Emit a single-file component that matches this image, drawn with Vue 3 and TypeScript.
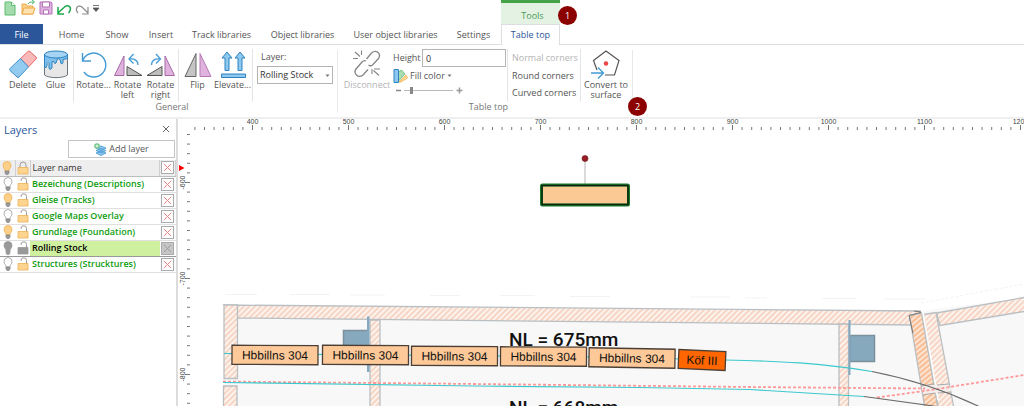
<script setup lang="ts">
import { ref } from 'vue'

interface Layer {
  name: string
  lit: boolean
  active?: boolean
}

interface Wagon {
  cx: number
  cy: number
  width: number
  angle: number
  label: string
  loco?: boolean
}

const tabs = [
  { label: 'Home', cls: 'w-home' },
  { label: 'Show', cls: 'w-show' },
  { label: 'Insert', cls: 'w-show' },
  { label: 'Track libraries', cls: 'w-track' },
  { label: 'Object libraries', cls: 'w-object' },
  { label: 'User object libraries', cls: 'w-user' },
  { label: 'Settings', cls: 'w-settings' },
]

const layers: Layer[] = [
  { name: 'Bezeichung (Descriptions)', lit: false },
  { name: 'Gleise (Tracks)', lit: true },
  { name: 'Google Maps Overlay', lit: false },
  { name: 'Grundlage (Foundation)', lit: true },
  { name: 'Rolling Stock', lit: false, active: true },
  { name: 'Structures (Strucktures)', lit: false },
]

const wagons: Wagon[] = [
  { cx: 275, cy: 355, width: 86, angle: 0.3, label: 'Hbbillns 304' },
  { cx: 365.5, cy: 355, width: 86, angle: 0.3, label: 'Hbbillns 304' },
  { cx: 454.5, cy: 356, width: 86, angle: 0.3, label: 'Hbbillns 304' },
  { cx: 543.5, cy: 356.5, width: 86, angle: 0.3, label: 'Hbbillns 304' },
  { cx: 632, cy: 358, width: 86, angle: 1, label: 'Hbbillns 304' },
  { cx: 702, cy: 360, width: 47, angle: 2.5, label: 'Köf III', loco: true },
]

const layer = ref('Rolling Stock')
const height = ref('0')
const size = ref(12)

const hTicks = Array.from({ length: 87 }, (_, i) => {
  const value = 340 + i * 10
  return { value, x: 252.5 + (value - 400) * 0.96, major: value % 100 === 0 }
})
const vTicks = Array.from({ length: 29 }, (_, i) => {
  const value = -550 - i * 10
  return { value, y: 182.5 - (value + 600) * 0.96, major: value % 100 === 0 }
})
</script>

<template>
  <div class="app">
    <header class="top">
      <div class="quick">
        <button class="q" aria-label="New">
          <svg width="16" height="16" viewBox="0 0 16 16"><path d="M3 2h6.500l3.500 3.500V15H3z" fill="#a5dcae" stroke="#5dbb70" /><path d="M9.500 2v3.500H13" fill="#fff" stroke="#5dbb70" /></svg>
        </button>
        <button class="q" aria-label="Open">
          <svg width="16" height="16" viewBox="0 0 16 16"><path d="M2 14V4h4l1 2h6v8z" fill="#fbd38d" stroke="#eda94a" /><path d="M2 14l2-6h11l-2 6z" fill="#fde3b0" stroke="#eda94a" /><path d="M8 4c1-2 3-2 6-2M12 0l2.500 2L12 4" fill="none" stroke="#4fb873" /></svg>
        </button>
        <button class="q" aria-label="Save">
          <svg width="16" height="16" viewBox="0 0 16 16"><path d="M2 2h11l1 1v11H2z" fill="#dfb3df" stroke="#b573b8" /><path d="M4.500 2h7v5h-7zM5.500 10h5v4h-5z" fill="#fff" stroke="#b573b8" /></svg>
        </button>
        <button class="q" aria-label="Undo">
          <svg width="16" height="16" viewBox="0 0 16 16"><path d="M2 7v7h6M2 13L8.500 7c5-3.500 8 1.500 4 6" fill="none" stroke="#1da64a" stroke-width="1.500" /></svg>
        </button>
        <button class="q" aria-label="Redo">
          <svg width="16" height="16" viewBox="0 0 16 16"><path d="M14 7v7H8M14 13L8 7C3.500 4 .5 9 4 13" fill="none" stroke="#8b8b8b" stroke-width="1.200" /></svg>
        </button>
        <button class="q-more" aria-label="Customize">
          <svg width="8" height="8" viewBox="0 0 8 8"><path d="M1 .5h6M1 3h6L4 6.500z" stroke="#555" fill="#555" stroke-width=".8" /></svg>
        </button>
      </div>
      <div class="context">Tools<span class="badge badge-one">1</span></div>
      <nav class="tabs">
        <button class="tab file">File</button>
        <button v-for="t in tabs" :key="t.label" class="tab" :class="t.cls">{{ t.label }}</button>
        <button class="tab current">Table top</button>
      </nav>
    </header>

    <section class="ribbon">
      <div class="group general">
        <div class="tools">
          <button class="tool">
            <svg width="30" height="30" viewBox="0 0 30 30"><path d="M12.500 9.500L20 2.500q1-1 2 0l6 5.500q1 1 0 2L20.500 18z" fill="#f9b9b9" stroke="#ea6a6a" /><path d="M12.500 9.500l8 8.500-9.500 10q-1 1-2 0L2 21.500q-1-1 0-2z" fill="#92caf0" stroke="#3d8ecb" /></svg>
            <span>Delete</span>
          </button>
          <button class="tool">
            <svg width="30" height="30" viewBox="0 0 30 30"><path d="M3.500 6v20c4 3.500 19 3.500 23 0V6z" fill="#e7e7e7" stroke="#6b7780" /><path d="M3.500 5.500v13q2 1 2.500-2v-2q1-2 2 0v5q1.500 2 3-.5v-6q1-1.500 2 0 .5 2.500 2 1l1-3.500q2-1.500 3 0l1 4q1.500 1 2-1v-3l4.500-1V5.500z" fill="#7fc0ed" stroke="#2e82be" /><ellipse cx="15" cy="5.500" rx="11.500" ry="3.500" fill="#a4d3f3" stroke="#2e82be" /></svg>
            <span>Glue</span>
          </button>
          <i class="sep"></i>
          <button class="tool mid">
            <svg width="30" height="30" viewBox="0 0 30 30"><path d="M3.500 4v8H12M3.500 12A12 12 0 1 1 5 23" fill="none" stroke="#459bd6" stroke-width="1.400" /></svg>
            <span>Rotate...</span>
          </button>
          <button class="tool">
            <svg width="30" height="30" viewBox="0 0 30 30"><path d="M11 7v19.500H1.500z" fill="#dfb3dd" stroke="#a969a8" /><path d="M14 17.500v9h15z" fill="#bdbdbd" stroke="#555" /><path d="M20.500 5L16 10l4.500 4.500M16 10c6-1 9 2 9 6" fill="none" stroke="#459bd6" stroke-width="1.300" /></svg>
            <span>Rotate<br />left</span>
          </button>
          <button class="tool">
            <svg width="30" height="30" viewBox="0 0 30 30"><path d="M19 7v19.500h9.500z" fill="#dfb3dd" stroke="#a969a8" /><path d="M16 17.500v9H1z" fill="#bdbdbd" stroke="#555" /><path d="M10 5l4.500 5-4.500 4.500M14.500 10C8.500 9 5.500 12 5.500 16" fill="none" stroke="#459bd6" stroke-width="1.300" /></svg>
            <span>Rotate<br />right</span>
          </button>
          <i class="sep"></i>
          <button class="tool">
            <svg width="30" height="30" viewBox="0 0 30 30"><path d="M13 4.500v23H2z" fill="#c4c4c4" stroke="#666" /><path d="M17 4.500v23h11z" fill="#dfb3dd" stroke="#b87ab6" /></svg>
            <span>Flip</span>
          </button>
          <button class="tool wide">
            <svg width="30" height="30" viewBox="0 0 30 30"><path d="M9 3l5 6h-3v12.500H7V9H4zM22 3l5 6h-3v12.500h-4V9h-3zM3.500 25h24v3.500h-24z" fill="#8cc8f0" stroke="#2e82be" /></svg>
            <span>Elevate...</span>
          </button>
          <i class="sep"></i>
          <div class="layer-field">
            <label for="layer">Layer:</label>
            <div class="select">
              <select id="layer" v-model="layer">
                <option v-for="l in layers" :key="l.name">{{ l.name }}</option>
              </select>
              <svg class="caret" width="5" height="4" viewBox="0 0 5 4"><path d="M.5.500h4l-2 2.500z" fill="#777" /></svg>
            </div>
          </div>
        </div>
        <div class="caption">General</div>
      </div>

      <div class="group tabletop">
        <div class="tools">
          <button class="tool broad" disabled>
            <svg width="30" height="30" viewBox="0 0 30 30"><g fill="none" stroke="#858585" stroke-width="1.300"><path d="M14.500 10l5-6c5-4 10 1 7 5.500l-6 6.500q-2 1.500-4 0M14 12q-2-1-4 1l-6 7c-3 4 2 10 7 6l5-5.500" /><path d="M3 3l5 4.500M9.500 1.500V6M1 9.500h5M20 20v5M22 20h6M21.500 21.500l5.500 5" stroke-width="1.100" /></g></svg>
            <span>Disconnect</span>
          </button>
          <div class="fields">
            <div class="height-row">
              <label for="height">Height</label>
              <input id="height" v-model="height" type="text" />
            </div>
            <button class="fill">
              <svg width="15" height="14" viewBox="0 0 15 14"><path d="M6 13l7-7 1.500 3L8 13z" fill="#fdd793" stroke="#efb24c" stroke-width=".8" /><path d="M5.500 12V3l3-2L12 5z" fill="#a9dcae" stroke="#58b873" stroke-width=".8" /><path d="M1 .5h4.500v13H1z" fill="#8cc8f0" stroke="#2e82be" /></svg>
              Fill color
              <svg width="5" height="4" viewBox="0 0 5 4"><path d="M.5.500h4l-2 2.500z" fill="#777" /></svg>
            </button>
            <div class="slide">
              <button class="step" aria-label="Smaller"><svg width="6" height="7" viewBox="0 0 6 7"><path d="M1 3.500h5" stroke="#888" stroke-width="1.500" /></svg></button>
              <input v-model.number="size" type="range" min="0" max="100" aria-label="Size" />
              <button class="step" aria-label="Larger"><svg width="7" height="7" viewBox="0 0 7 7"><path d="M.5 3.500h6M3.500.500v6" stroke="#999" stroke-width="1.500" /></svg></button>
            </div>
          </div>
          <i class="sep"></i>
          <div class="corners">
            <button disabled>Normal corners</button>
            <button>Round corners</button>
            <button>Curved corners</button>
          </div>
          <i class="sep"></i>
          <button class="tool broad">
            <svg width="32" height="30" viewBox="0 0 32 30"><path d="M7 21L3.500 11.500 16 2l13 9.500L24.500 26H15" fill="none" stroke="#555" stroke-width="1.200" /><circle cx="16" cy="14.500" r="2.200" fill="#ef4444" /><path d="M1 24h12M8 18.500l5.500 5.500L8 29.500" fill="none" stroke="#459bd6" stroke-width="1.400" /></svg>
            <span>Convert to<br />surface</span>
          </button>
        </div>
        <div class="caption">Table top</div>
        <span class="badge badge-two">2</span>
      </div>
    </section>

    <main class="work">
      <aside class="panel">
        <div class="panel-head">
          <h2>Layers</h2>
          <button class="close" aria-label="Close"><svg width="8" height="8" viewBox="0 0 8 8"><path d="M1 1l6 6M7 1L1 7" stroke="#666" /></svg></button>
        </div>
        <button class="add">
          <svg width="13" height="13" viewBox="0 0 13 13"><path d="M2 10l5-2 5 2-5 2.500zM2 7.500l5-2 5 2L7 10zM2 5l5-2 5 2-5 2.500z" fill="#8cc8f0" stroke="#4496cf" stroke-width=".8" /><circle cx="3" cy="3" r="2.800" fill="#6cc487" /><path d="M1.500 3h3M3 1.500v3" stroke="#fff" stroke-width=".9" /></svg>
          Add layer
        </button>
        <table>
          <thead>
            <tr>
              <th class="c-icon"><svg class="bulb lit" width="10" height="14" viewBox="0 0 10 14"><path d="M3 10C3 7.500 1 7 1 4.500a4 4 0 0 1 8 0C9 7 7 7.500 7 10z" /><path class="base" d="M3 10h4v2L6 13.500H4L3 12z" /></svg></th>
              <th class="c-icon"><svg class="lock" width="12" height="14" viewBox="0 0 12 14"><path class="arc" d="M3 7V4a3 3 0 0 1 6 0v3" /><path class="body" d="M1 6.500h10V13H1z" /></svg></th>
              <th class="c-name">Layer name</th>
              <th class="c-x"><button class="del" aria-label="Delete layers"><svg width="12" height="12" viewBox="0 0 12 12"><path d="M2 2l8 8M10 2l-8 8" /></svg></button></th>
            </tr>
          </thead>
          <tbody>
            <tr v-for="l in layers" :key="l.name" :class="{ active: l.active }">
              <td class="c-icon"><svg class="bulb" :class="{ lit: l.lit }" width="10" height="14" viewBox="0 0 10 14"><path d="M3 10C3 7.500 1 7 1 4.500a4 4 0 0 1 8 0C9 7 7 7.500 7 10z" /><path class="base" d="M3 10h4v2L6 13.500H4L3 12z" /></svg></td>
              <td class="c-icon"><svg class="lock" width="12" height="14" viewBox="0 0 12 14"><path class="arc" d="M4 4V3.500a2.500 2.500 0 0 1 5.500 0V7" /><path class="body" d="M1 6.500h10V13H1z" /></svg></td>
              <td class="c-name">{{ l.name }}</td>
              <td class="c-x"><button class="del" :aria-label="'Delete ' + l.name"><svg width="12" height="12" viewBox="0 0 12 12"><path d="M2 2l8 8M10 2l-8 8" /></svg></button></td>
            </tr>
          </tbody>
        </table>
      </aside>

      <svg class="canvas">
        <defs>
          <pattern id="hatch" width="4" height="4" patternUnits="userSpaceOnUse" patternTransform="rotate(45)">
            <rect width="4" height="4" fill="#fdf3ee" />
            <rect width="2" height="4" fill="#f6d5c4" />
          </pattern>
          <pattern id="hatch-strong" width="4" height="4" patternUnits="userSpaceOnUse" patternTransform="rotate(50)">
            <rect width="4" height="4" fill="#fde4d2" />
            <rect width="2" height="4" fill="#f7bd95" />
          </pattern>
        </defs>
        <g transform="translate(-178 -119)">
          <g class="plan">
            <path class="floor" d="M224 305L920 311 1024 298 1400 240V900H224z" />
            <path class="faint" d="M225 294.500h32M290 294.500h40M350 295h35M430 295.500h30M500 295.500h35M570 296.500h40M690 297h40M745 298h22M822 298.500h34M885 299h40" />
            <path class="faint dash" d="M921 303L1024 284" />
            <g fill="url(#hatch)" class="wall">
              <path d="M224 305L920 311 915 325 237 318z" />
              <path d="M224 305h13.500v73.500H224zM223.500 386h13.500v400h-13.500z" />
              <path d="M370 320h10v500h-10zM839 324h9.500v500H839z" />
              <path d="M936.500 313L1024 297.500 1400 231v14L1024 311.500 940 325.500z" />
              <path d="M923.500 314.500l12.500-2L953.500 406l60 320h-16L938 406z" />
            </g>
            <path d="M909.500 315.500l12-2.500L937.500 406l60 350h-14L924.500 406z" fill="url(#hatch-strong)" class="wall" />
            <path d="M909 315.500l4 18M909 315.500l12-3M914 311l7 1" class="edge" />
            <path d="M922 306L938 400" stroke="#fff" stroke-width="1.500" />
            <path d="M922 388l27-2.500M923 392l28-2.500" stroke="#f4efec" stroke-width="4" />
            <path d="M921 386l13-2M937 385l12-1M923 395l12-2M938 393l13-1" class="joint" />
            <path d="M343.500 330.500H368V347h-24.500zM850 335.500h24.500v26H850z" class="block" />
            <path d="M367 316.500h2.500V372H367zM848.500 320h2v55h-2z" class="bar" />
          </g>

          <text x="509" y="346" class="note">NL = 675mm</text>
          <text x="509" y="414" class="note">NL = 668mm</text>

          <g class="tracks">
            <path d="M223 381.500L475 384 750 387 925 388.500" class="guide" />
            <path d="M877 397.500L931 390 1024 375 1400 314" class="guide" />
            <path d="M224 353.500L600 357 725 360C780 361 820 363 872 371.500" class="rail" />
            <path d="M223 382.500L475 386 640 387.500 750 389.500 864 396.500" class="rail" />
            <path d="M872 371.500C900 377 940 388 978 406L1030 435M864 396.500L930 405.500 980 414" class="rail far" />
          </g>

          <g v-for="w in wagons" :key="w.cx" :transform="`rotate(${w.angle} ${w.cx} ${w.cy})`">
            <rect :x="w.cx - w.width / 2" :y="w.cy - 9.500" :width="w.width" height="19" class="wagon" :class="{ loco: w.loco }" />
            <text :x="w.cx" :y="w.cy + 4.500" class="wagon-text">{{ w.label }}</text>
          </g>

          <path d="M585 161v23" stroke="#b5b5b5" />
          <circle cx="585" cy="158.500" r="3" fill="#9c1b22" stroke="#6c2a2e" stroke-width=".7" />
          <rect x="541.500" y="185" width="87" height="20" rx="1" fill="#fbc993" stroke="#1b7a2a" stroke-width="3" />
          <rect x="542" y="185.500" width="86" height="19" fill="none" stroke="#0b260d" stroke-width="1.500" />

          <g class="ruler">
            <template v-for="t in hTicks" :key="t.value">
              <path :d="`M${t.x} ${t.major ? 125 : 127}V130`" />
              <text v-if="t.major" :x="t.x" y="124">{{ t.value }}</text>
            </template>
            <template v-for="t in vTicks" :key="t.value">
              <path :d="`M${t.major ? 185 : 187} ${t.y}H190`" />
              <text v-if="t.major" :transform="`translate(184.500 ${t.y}) rotate(-90)`">{{ t.value }}</text>
            </template>
            <path d="M179 165l5.500 3-5.500 3z" class="marker" />
          </g>
        </g>
      </svg>
    </main>
  </div>
</template>

<style>
body {
  background: #fff;
  overflow: hidden;
}
</style>

<style scoped>
.app {
  display: flex;
  flex-direction: column;
  height: 100vh;
  font: 9px/10px "Open Sans", "Noto Sans", sans-serif;
  color: #555;
}
.app * {
  box-sizing: border-box;
}
button,
input,
select {
  margin: 0;
  padding: 0;
  border: 0;
  border-radius: 0;
  background: none;
  font: inherit;
  color: inherit;
}
svg {
  display: block;
  flex: none;
}
.top {
  display: grid;
  grid-template-columns: 501px 59px 1fr;
  grid-template-rows: 24px 21px;
}
.quick {
  display: flex;
  align-items: flex-start;
  gap: 2px;
  padding-left: 2px;
}
.q {
  width: 16px;
  height: 16px;
}
.q-more {
  padding-top: 5px;
}
.context {
  position: relative;
  display: flex;
  align-items: center;
  justify-content: center;
  padding: 4px 0 0 4px;
  border-top: 3px solid #45a247;
  background: #e4f2e4;
  color: #4b9a55;
}
.badge {
  position: absolute;
  z-index: 1;
  width: 19px;
  height: 19px;
  border-radius: 50%;
  background: #8b0000;
  color: #fff;
  line-height: 19px;
  text-align: center;
}
.badge-one {
  left: 57px;
  top: 3px;
}
.badge-two {
  right: -14px;
  top: 52px;
}
.tabs {
  grid-column: 1 / -1;
  display: flex;
  border-bottom: 1px solid #dcdfe1;
}
.tab {
  white-space: nowrap;
  padding-top: 2px;
}
.file {
  width: 43px;
  margin-right: 5px;
  background: #2b579a;
  color: #fff;
  height: 20px;
}
.w-home { width: 47px; }
.w-show { width: 44px; }
.w-track { width: 77px; }
.w-object { width: 85px; }
.w-user { width: 101px; }
.w-settings { width: 55px; }
.current {
  width: 59px;
  height: 21px;
  padding-top: 0;
  border: 1px solid #dcdfe1;
  border-bottom: 0;
  background: #fff;
  color: #2b579a;
}
.ribbon {
  display: flex;
  height: 74px;
  border-bottom: 2px solid #efefef;
}
.group {
  position: relative;
  padding-top: 4px;
}
.group::after {
  content: "";
  position: absolute;
  right: 0;
  top: 5px;
  bottom: 5px;
  width: 1px;
  background: #e6e8ea;
}
.general {
  width: 338px;
  padding-left: 6px;
}
.tabletop {
  width: 295px;
  padding-left: 6px;
}
.tools {
  display: flex;
  height: 53px;
}
.caption {
  text-align: center;
  color: #777;
}
.tool {
  display: flex;
  flex-direction: column;
  align-items: center;
  gap: 1px;
  width: 33px;
  white-space: nowrap;
}
.tool.mid { width: 35px; }
.tool.wide { width: 37px; }
.tool.broad { width: 46px; }
button:disabled {
  color: #b4b4b4;
}
.sep {
  flex: none;
  width: 1px;
  margin: 0 2px 0 1px;
  background: #e3e6e8;
}
.layer-field {
  width: 76px;
  margin-left: 2px;
}
.layer-field label {
  display: block;
  padding: 3px 0 4px 4px;
}
.select {
  position: relative;
}
select {
  appearance: none;
  display: block;
  width: 100%;
  height: 18px;
  padding-left: 2px;
  border: 1px solid #b4b4b4;
  color: #333;
}
.caret {
  position: absolute;
  right: 3px;
  top: 8px;
}
.fields {
  width: 113px;
  margin-left: 3px;
}
.height-row {
  display: flex;
  align-items: center;
  gap: 2px;
}
.height-row label {
  width: 27px;
  white-space: nowrap;
}
.height-row input {
  flex: 1;
  min-width: 0;
  height: 18px;
  padding-left: 3px;
  border: 1px solid #b4b4b4;
  color: #333;
}
.fill {
  display: flex;
  align-items: center;
  gap: 2px;
  height: 17px;
}
.slide {
  display: flex;
  align-items: center;
  gap: 3px;
  padding-left: 2px;
  height: 12px;
}
input[type="range"] {
  appearance: none;
  width: 49px;
  height: 8px;
  background: linear-gradient(#bbb, #bbb) center / 100% 1px no-repeat;
}
input[type="range"]::-webkit-slider-thumb {
  appearance: none;
  width: 3px;
  height: 7px;
  background: #888;
}
.corners {
  display: flex;
  flex-direction: column;
  align-items: flex-start;
  width: 69px;
  padding-left: 2px;
  white-space: nowrap;
}
.corners button {
  height: 18px;
}
.work {
  display: flex;
  flex: 1;
  min-height: 0;
}
.panel {
  flex: none;
  width: 178px;
  border-right: 2px solid #dcdcdc;
}
.panel-head {
  display: flex;
  align-items: flex-start;
  justify-content: space-between;
  height: 21px;
  padding: 3px 6px 0 4px;
}
h2 {
  margin: 0;
  font-size: 11px;
  line-height: 16px;
  font-weight: 400;
  color: #2b579a;
}
.close {
  padding: 3px 0;
}
.add {
  display: flex;
  align-items: center;
  justify-content: center;
  gap: 2px;
  width: 107px;
  height: 18px;
  margin: 0 0 2px 68px;
  border: 1px solid #c4c4c4;
}
table {
  width: 176px;
  border-collapse: collapse;
  table-layout: fixed;
}
th,
td {
  padding: 0;
  height: 16px;
  border-bottom: 1px solid #e0e0e0;
}
th {
  background: #eee;
  border-right: 1px solid #d0d0d0;
  border-bottom-color: #bdbdbd;
  font-weight: 400;
  color: #333;
}
.c-icon { width: 15px; }
.c-x { width: 16px; }
.c-name {
  padding-left: 2px;
  text-align: left;
  white-space: nowrap;
}
td.c-name {
  font-weight: 600;
  color: #0f9c0f;
}
.c-icon svg,
.del {
  margin: 0 auto;
}
.bulb path {
  fill: #fff;
  stroke: #999;
  stroke-width: 0.8;
}
.bulb.lit path {
  fill: #fdd08a;
  stroke: #eeb057;
}
.bulb .base,
.bulb.lit .base {
  fill: #999;
  stroke: #888;
}
.lock .arc {
  fill: none;
  stroke: #999;
}
.lock .body {
  fill: #fdd590;
  stroke: #eeb057;
  stroke-width: 0.8;
}
.del {
  display: block;
  width: 13px;
  height: 13px;
  border: 1px solid #aaa;
  background: #fff;
}
.del svg {
  width: 11px;
  height: 11px;
  stroke: #f08080;
}
.active td {
  border-top: 1px solid #999;
  border-bottom: 1px solid #999;
}
.active td.c-name {
  background: #cff09e;
  color: #000;
}
.active .del {
  background: #c6c6c6;
}
.active .del svg {
  stroke: #999;
}
.active .bulb path,
.active .lock .body {
  fill: #999;
  stroke: #999;
}
.canvas {
  flex: 1;
  min-width: 0;
  height: 100%;
}
.floor { fill: #f8f8f8; }
.faint {
  fill: none;
  stroke: #f3f3f3;
}
.faint.dash { stroke-dasharray: 3 2; }
.wall { stroke: #b9bfc2; stroke-width: 1.3; }
.edge, .joint { fill: none; stroke: #777; }
.joint { stroke: #aaa; }
.block { fill: #86a9bd; stroke: #7b8f9d; stroke-width: 1.5; }
.bar { fill: #86a8c0; }
.note {
  font: 500 19px Roboto, sans-serif;
  fill: #111;
}
.rail {
  fill: none;
  stroke: #3cc9cd;
  stroke-width: 1.2;
}
.rail.far { stroke: #6a6a6a; }
.guide {
  fill: none;
  stroke: #f99;
  stroke-width: 1.8;
  stroke-dasharray: 3 2;
}
.wagon {
  fill: #fdc998;
  stroke: #4c4036;
  stroke-width: 1.3;
}
.wagon.loco { fill: #ff6600; }
.wagon-text {
  font: 12px "Liberation Sans", sans-serif;
  fill: #111;
  text-anchor: middle;
}
.ruler path { stroke: #777; }
.ruler text {
  font: 7px "Liberation Sans", sans-serif;
  fill: #444;
  text-anchor: middle;
}
.ruler .marker {
  fill: #f00;
  stroke: none;
}
</style>
